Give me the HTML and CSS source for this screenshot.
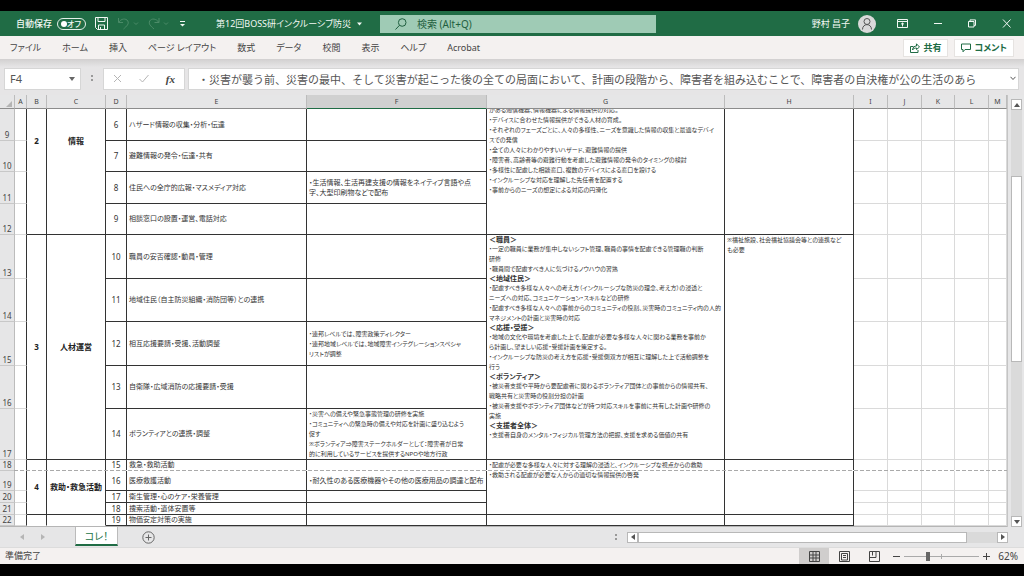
FILE: index.html
```html
<!DOCTYPE html>
<html lang="ja">
<head>
<meta charset="utf-8">
<meta name="viewport" content="width=device-width, initial-scale=1">
<title>第12回BOSS研インクルーシブ防災</title>
<link rel="stylesheet" href="styles.css">
</head>
<body>
<div class="app">
  <header class="titlebar">
    <div class="quick">
      <label class="autosave">自動保存 <input type="checkbox" class="switch-input"><span class="switch">オフ</span></label>
      <button class="icon-btn save" aria-label="上書き保存"><svg width="13" height="13" viewBox="0 0 13 13"><path d="M.5.5h12v12h-10l-2-2zM3 .5v4h7v-4M3.500 12.500v-4.500h6v4.500M5.500 10v2.500"/></svg></button>
      <button class="icon-btn dim" aria-label="元に戻す"><svg width="22" height="13" viewBox="0 0 22 13"><path d="M1.500 1v4.500H6M1.800 5.300C4 1.500 9 1 10.800 4c1.500 3-1 5-4.300 8M17 5.500l2 2 2-2"/></svg></button>
      <button class="icon-btn dim" aria-label="やり直し"><svg width="22" height="13" viewBox="0 0 22 13"><path d="M11 1v4.500H6.500M10.700 5.300C8.500 1.500 3.500 1 1.700 4c-1.500 3 1 5 4.300 8M16 5.500l2 2 2-2"/></svg></button>
      <button class="icon-btn" aria-label="クイック アクセス"><svg width="7" height="8" viewBox="0 0 7 8"><path d="M1 1.500h5"/><path class="fill" d="M1 4h5L3.500 6.500z"/></svg></button>
    </div>
    <button class="doc-name">第12回BOSS研インクルーシブ防災 <svg width="5" height="4" viewBox="0 0 5 4"><path class="fill" d="M0 .5h5L2.500 3.500z"/></svg></button>
    <label class="search"><svg width="12" height="12" viewBox="0 0 12 12"><circle cx="7.200" cy="4.500" r="3.800"/><path d="M4.500 7.300L.5 11.500"/></svg><input type="text" placeholder="検索 (Alt+Q)" aria-label="検索"></label>
    <div class="account">
      <span>野村 昌子</span>
      <span class="avatar"><svg width="18" height="18" viewBox="0 0 18 18"><circle cx="9" cy="6.500" r="3"/><path d="M4.500 14.500c0-6.500 9-6.500 9 0"/></svg></span>
    </div>
    <div class="window-btns">
      <button class="icon-btn" aria-label="リボンの表示オプション"><svg width="11" height="9" viewBox="0 0 11 9"><path d="M.5.5h10v8H.5zM.5 2.500h10M5.500 7.500V4M4 5.300L5.500 4 7 5.300"/></svg></button>
      <button class="icon-btn" aria-label="最小化"><svg width="8" height="9" viewBox="0 0 8 9"><path d="M0 4.500h8"/></svg></button>
      <button class="icon-btn" aria-label="元のサイズに戻す"><svg width="8" height="9" viewBox="0 0 8 9"><path d="M.5 2.500h5.500v5.500H.5zM2 2.500V.9h5.500v5.500H6"/></svg></button>
      <button class="icon-btn" aria-label="閉じる"><svg width="9" height="9" viewBox="0 0 9 9"><path d="M1 .5l7.500 8M8.500.5L1 8.500"/></svg></button>
    </div>
  </header>

  <nav class="ribbon">
    <button>ファイル</button><button>ホーム</button><button>挿入</button><button>ページ レイアウト</button><button>数式</button><button>データ</button><button>校閲</button><button>表示</button><button>ヘルプ</button><button>Acrobat</button>
    <div class="ribbon-actions">
      <button class="action"><svg width="10" height="10" viewBox="0 0 10 10"><path d="M3.500 3.500h-3v6h7.500V7M2.500 7c.3-3 2-4 4-4V.8L9.500 4 6.500 6.500V5C4.500 5 3.300 5.500 2.500 7z"/></svg>共有</button>
      <button class="action"><svg width="10" height="10" viewBox="0 0 10 10"><path d="M.5 1h9v5.500H4L2 8.800V6.500H.5z"/></svg>コメント</button>
    </div>
  </nav>

  <div class="formula-row">
    <div class="name-box"><input type="text" value="F4" aria-label="名前ボックス"><svg width="6" height="4" viewBox="0 0 6 4"><path d="M0 0h6L3 4z"/></svg></div>
    <span class="grip"></span>
    <div class="formula-btns">
      <button aria-label="キャンセル"><svg width="9" height="9" viewBox="0 0 9 9"><path d="M1 1l7 7M8 1L1 8"/></svg></button>
      <button aria-label="入力"><svg width="10" height="9" viewBox="0 0 10 9"><path d="M.5 5L3.500 8 9.500 1"/></svg></button>
      <button class="fx" aria-label="関数の挿入">fx</button>
    </div>
    <div class="formula"><input type="text" aria-label="数式バー" value="・災害が襲う前、災害の最中、そして災害が起こった後の全ての局面において、計画の段階から、障害者を組み込むことで、障害者の自決権が公の生活のあら"><svg width="6" height="5" viewBox="0 0 6 5"><path d="M.5.8L3 3.500 5.500.8"/></svg></div>
  </div>

  <main class="workspace">
    <div class="sheet">
      <table>
        <colgroup><col class="c-num"><col class="c-a"><col class="c-b"><col class="c-c"><col class="c-d"><col class="c-e"><col class="c-f"><col class="c-g"><col class="c-h"><col class="c-i"><col class="c-i"><col class="c-k"><col class="c-i"><col></colgroup>
        <thead><tr><th class="corner"><svg width="6" height="6" viewBox="0 0 6 6"><path d="M6 0v6H0z"/></svg></th><th>A</th><th>B</th><th>C</th><th>D</th><th>E</th><th class="selected">F</th><th>G</th><th>H</th><th>I</th><th>J</th><th>K</th><th>L</th><th>M</th></tr></thead>
        <tbody>
          <tr class="h32"><th>9</th><td class="edge"></td><td class="box group upper" rowspan="4">2</td><td class="box group upper" rowspan="4">情報</td><td class="box no">6</td><td class="box">ハザード情報の収集・分析・伝達</td><td class="box"></td>
            <td class="box note" rowspan="4"><div class="scrolled"><p>がある通信機器、情報機器による情報提供の対応。</p><p>・デバイスに合わせた情報提供ができる人材の育成。</p><p>・それぞれのフェーズごとに、人々の多様性、ニーズを意識した情報の収集と最適なデバイ<br>スでの発信</p><p>・全ての人々にわかりやすいハザード、避難情報の提供</p><p>・障害者、高齢者等の避難行動を考慮した避難情報の発令のタイミングの検討</p><p>・多様性に配慮した相談窓口、複数のデバイスによる窓口を設ける</p><p>・インクルーシブな対応を理解した先任者を配置する</p><p>・事前からのニーズの想定による対応の円滑化</p></div></td>
            <td class="box" rowspan="4"></td><td></td><td></td><td></td><td></td><td></td></tr>
          <tr class="h31"><th>10</th><td class="edge"></td><td class="box no">7</td><td class="box">避難情報の発令・伝達・共有</td><td class="box"></td><td></td><td></td><td></td><td></td><td></td></tr>
          <tr class="h32"><th>11</th><td class="edge"></td><td class="box no">8</td><td class="box">住民への全庁的広報・マスメディア対応</td><td class="box">・生活情報、生活再建支援の情報をネイティブ言語や点<br>字、大型印刷物などで配布</td><td></td><td></td><td></td><td></td><td></td></tr>
          <tr class="h31"><th>12</th><td class="edge"></td><td class="box no">9</td><td class="box">相談窓口の設置・運営、電話対応</td><td class="box"></td><td></td><td></td><td></td><td></td><td></td></tr>
          <tr class="h44"><th>13</th><td class="edge"></td><td class="box group" rowspan="5">3</td><td class="box group" rowspan="5">人材運営</td><td class="box no">10</td><td class="box">職員の安否確認・動員・管理</td><td class="box"></td>
            <td class="box note" rowspan="5"><h2>＜職員＞</h2><p>・一定の職員に業務が集中しないシフト管理、職員の事情を配慮できる管理職の判断<br>研修</p><p>・職員間で配慮すべき人に気づけるノウハウの習熟</p><h2>＜地域住民＞</h2><p>・配慮すべき多様な人々への考え方（インクルーシブな防災の理念、考え方）の浸透と<br>ニーズへの対応、コミュニケーション・スキルなどの研修</p><p>・配慮すべき多様な人々への事前からのコミュニティの役割、災害時のコミュニティ内の人的<br>マネジメントの計画と災害時の対応</p><h2>＜応援・受援＞</h2><p>・地域の文化や環境を考慮した上で、配慮が必要な多様な人々に関わる業務を事前か<br>ら計画し、望ましい応援・受援計画を策定する。</p><p>・インクルーシブな防災の考え方を応援・受援側双方が相互に理解した上で活動調整を<br>行う</p><h2>＜ボランティア＞</h2><p>・被災者支援や平時から要配慮者に関わるボランティア団体との事前からの情報共有、<br>戦略共有と災害時の役割分担の計画</p><p>・被災者支援やボランティア団体などが持つ対応スキルを事前に共有した計画や研修の<br>実施</p><h2>＜支援者全体＞</h2><p>・支援者自身のメンタル・フィジカル管理方法の把握、支援を求める価値の共有</p></td>
            <td class="box note" rowspan="5"><p>※福祉施設、社会福祉協議会等との連携など<br>も必要</p></td><td></td><td></td><td></td><td></td><td></td></tr>
          <tr class="h43"><th>14</th><td class="edge"></td><td class="box no">11</td><td class="box">地域住民（自主防災組織・消防団等）との連携</td><td class="box"></td><td></td><td></td><td></td><td></td><td></td></tr>
          <tr class="h44"><th>15</th><td class="edge"></td><td class="box no">12</td><td class="box">相互応援要請・受援、活動調整</td><td class="box dense">・連邦レベルでは、障害政策ディレクター<br>・連邦地域レベルでは、地域障害インテグレーションスペシャ<br>リストが調整</td><td></td><td></td><td></td><td></td><td></td></tr>
          <tr class="h43"><th>16</th><td class="edge"></td><td class="box no">13</td><td class="box">自衛隊・広域消防の応援要請・受援</td><td class="box"></td><td></td><td></td><td></td><td></td><td></td></tr>
          <tr class="h51"><th>17</th><td class="edge"></td><td class="box no">14</td><td class="box">ボランティアとの連携・調整</td><td class="box dense">・災害への備えや緊急事態管理の研修を実施<br>・コミュニティへの緊急時の備えや対応を計画に盛り込むよう<br>促す<br>※ボランティア⇒障害ステークホルダーとして：障害者が日常<br>的に利用しているサービスを提供するNPOや地方行政</td><td></td><td></td><td></td><td></td><td></td></tr>
          <tr class="h11"><th class="breaks">18<span class="page-break"></span></th><td class="edge"></td><td class="box group" rowspan="4">4</td><td class="box group" rowspan="4">救助・救急活動</td><td class="box no open">15</td><td class="box open">救急・救助活動</td><td class="box open"></td>
            <td class="box note" rowspan="4"><p>・配慮が必要な多様な人々に対する理解の浸透と、インクルーシブな視点からの救助</p><p>・救助される配慮が必要な人からの適切な情報提供の啓発</p></td>
            <td class="box" rowspan="4"></td><td></td><td></td><td></td><td></td><td></td></tr>
          <tr class="h20"><th>19</th><td class="edge"></td><td class="box no">16</td><td class="box">医療救護活動</td><td class="box">・耐久性のある医療機器やその他の医療用品の調達と配布</td><td></td><td></td><td></td><td></td><td></td></tr>
          <tr class="h12"><th>20</th><td class="edge"></td><td class="box no">17</td><td class="box">衛生管理・心のケア・栄養管理</td><td class="box"></td><td></td><td></td><td></td><td></td><td></td></tr>
          <tr class="h12"><th>21</th><td class="edge"></td><td class="box no">18</td><td class="box">捜索活動・遺体安置等</td><td class="box"></td><td></td><td></td><td></td><td></td><td></td></tr>
          <tr class="h11"><th>22</th><td class="edge"></td><td class="box open"></td><td class="box open"></td><td class="box no">19</td><td class="box">物価安定対策の実施</td><td class="box"></td><td class="box"></td><td class="box"></td><td></td><td></td><td></td><td></td><td></td></tr>
          <tr class="h12"><th></th><td class="edge"></td><td class="box"></td><td class="box"></td><td class="box"></td><td class="box"></td><td class="box"></td><td class="box"></td><td class="box"></td><td></td><td></td><td></td><td></td><td></td></tr>
        </tbody>
      </table>
    </div>
    <div class="vscroll">
      <button aria-label="上へ"><svg width="6" height="4" viewBox="0 0 6 4"><path d="M0 4h6L3 0z"/></svg></button>
      <div class="vtrack"><div class="vthumb"></div></div>
      <button aria-label="下へ"><svg width="6" height="4" viewBox="0 0 6 4"><path d="M0 0h6L3 4z"/></svg></button>
    </div>
  </main>

  <div class="tabbar">
    <div class="tab-nav">
      <button aria-label="前のシート"><svg width="4" height="6" viewBox="0 0 4 6"><path d="M4 0v6L0 3z"/></svg></button>
      <button aria-label="次のシート"><svg width="4" height="6" viewBox="0 0 4 6"><path d="M0 0v6l4-3z"/></svg></button>
    </div>
    <button class="sheet-tab">コレ！</button>
    <button class="add" aria-label="新しいシート"><svg width="13" height="13" viewBox="0 0 13 13"><circle cx="6.500" cy="6.500" r="5.700"/><path d="M3.500 6.500h6M6.500 3.500v6"/></svg></button>
    <span class="grip"></span>
    <div class="hscroll">
      <button aria-label="左へ"><svg width="4" height="6" viewBox="0 0 4 6"><path d="M4 0v6L0 3z"/></svg></button>
      <div class="htrack"><div class="hthumb"></div></div>
      <button aria-label="右へ"><svg width="4" height="6" viewBox="0 0 4 6"><path d="M0 0v6l4-3z"/></svg></button>
    </div>
  </div>

  <footer class="status">
    <span class="ready">準備完了</span>
    <button class="view active" aria-label="標準"><svg width="11" height="11" viewBox="0 0 11 11"><path d="M.5.5h10v10H.5zM.5 4h10M.5 7h10M4 .5v10M7 .5v10"/></svg></button>
    <button class="view" aria-label="ページ レイアウト"><svg width="11" height="11" viewBox="0 0 11 11"><path d="M.5.5h10v10H.5zM2.500 2.500h6v6.500h-6zM4 4.500h3M4 6.500h3"/></svg></button>
    <button class="view" aria-label="改ページ プレビュー"><svg width="11" height="11" viewBox="0 0 11 11"><path d="M.5.5h10v10H.5zM.5 6.500h6.500V.5M3.500.5v4"/></svg></button>
    <div class="zoom">
      <button aria-label="縮小"><svg width="7" height="7" viewBox="0 0 7 7"><path d="M0 3.500h7"/></svg></button>
      <input type="range" min="0" max="100" value="30" aria-label="ズーム">
      <button aria-label="拡大"><svg width="7" height="7" viewBox="0 0 7 7"><path d="M0 3.500h7M3.500 0v7"/></svg></button>
      <span>62%</span>
    </div>
  </footer>
</div>
</body>
</html>
```
FILE: styles.css
```css
* { box-sizing: border-box; }

html, body { height: 100%; margin: 0; }

body {
  background: #000;
  color: #444;
  font-family: "Noto Sans", "Noto Sans CJK JP", sans-serif;
  font-size: 10px;
  font-feature-settings: "palt";
}

button, input {
  margin: 0;
  padding: 0;
  border: 0;
  background: none;
  color: inherit;
  font: inherit;
  font-feature-settings: inherit;
}

svg { display: block; flex: none; fill: none; stroke: currentColor; stroke-width: 1; }
svg .fill { fill: currentColor; stroke: none; }

.app {
  display: flex;
  flex-direction: column;
  height: 100%;
  padding: 11px 0 12px;
}

/* Title bar */
.titlebar {
  display: flex;
  flex: none;
  align-items: center;
  height: 25px;
  background: #206c45;
  color: #f2f8f4;
  line-height: 14px;
}
.quick { display: flex; align-items: center; width: 216px; padding-left: 16px; gap: 9px; }
.autosave { display: flex; align-items: center; gap: 5px; font-size: 9px; font-weight: 500; white-space: nowrap; }
.switch-input { position: absolute; opacity: 0; }
.switch {
  display: flex;
  align-items: center;
  justify-content: space-between;
  width: 29px;
  height: 12px;
  padding: 0 4px 0 3px;
  border: 1px solid #e4f0e9;
  border-radius: 6px;
  font-size: 8px;
}
.switch::before { content: ""; width: 6px; height: 6px; border-radius: 50%; background: #fff; }
.icon-btn { display: flex; }
.dim { color: #4b8b68; }
.doc-name { display: flex; align-items: center; gap: 6px; width: 164px; white-space: nowrap; font-size: 9px; }
.search {
  display: flex;
  flex: 0 1 276px;
  align-items: center;
  gap: 10px;
  height: 18px;
  padding-left: 15px;
  background: #9fcbb5;
  color: #1f5f3f;
}
.search input { flex: 1; min-width: 0; }
.search input::placeholder { color: #1f5f3f; opacity: 1; }
.account { display: flex; align-items: center; gap: 8px; margin-left: auto; font-size: 9px; white-space: nowrap; }
.avatar { border-radius: 50%; background: #d9d9d9; color: #555; }
.window-btns { display: flex; align-items: center; gap: 26px; padding: 0 13px 0 21px; }

/* Ribbon tabs */
.ribbon {
  display: flex;
  flex: none;
  align-items: center;
  gap: 21px;
  height: 23px;
  padding: 0 10px;
  background: #f4f1f0;
  font-size: 9px;
  white-space: nowrap;
}
.ribbon-actions { display: flex; gap: 6px; margin-left: auto; }
.action {
  display: flex;
  align-items: center;
  gap: 3px;
  height: 18px;
  padding: 0 6px;
  border: 1px solid #e6e3e1;
  background: #fff;
  color: #206c45;
  font-weight: 700;
}

/* Formula bar */
.formula-row {
  display: flex;
  flex: none;
  align-items: center;
  height: 36px;
  padding: 6px 5px 3px 4px;
  background: linear-gradient(#d2d0d0, #e6e5e6 8px);
  color: #555;
}
.name-box, .formula-btns, .formula {
  display: flex;
  align-items: center;
  height: 22px;
  border: 1px solid #d6d6d6;
  background: #fff;
}
.name-box { width: 77px; padding: 0 5px; }
.name-box input { flex: 1; min-width: 0; font-size: 11px; }
.name-box svg { fill: #666; stroke: none; }
.grip { width: 22px; height: 9px; background: radial-gradient(circle, #999 1px, transparent 1px) center top / 22px 4px repeat-y; }
.formula-btns { width: 82px; justify-content: space-between; padding: 0 9px; color: #b5b5b5; }
.formula-btns .fx { color: #444; font: italic 700 11px "Liberation Serif", serif; }
.formula { flex: 1; min-width: 0; margin-left: 3px; padding: 0 2px 0 9px; }
.formula input {
  flex: 1;
  min-width: 0;
  font-family: "Noto Sans CJK JP", sans-serif;
  font-size: 11px;
  font-feature-settings: normal;
}

/* Sheet */
.workspace { display: flex; flex: 1; min-height: 0; background: #e6e6e7; }
.sheet { flex: 1; min-width: 0; overflow: hidden; background: #fff; border-bottom: 1px solid #b5b5b5; }
.sheet table { width: 100%; table-layout: fixed; border-collapse: separate; border-spacing: 0; }
.c-num { width: 15px; }
.c-a { width: 12px; }
.c-b { width: 20px; }
.c-c { width: 59px; }
.c-d { width: 21px; }
.c-e, .c-f { width: 180px; }
.c-g { width: 238px; }
.c-h { width: 129px; }
.c-i { width: 34px; }
.c-k { width: 33px; }

.sheet th {
  padding: 0;
  border-right: 1px solid #bcbcbc;
  border-bottom: 1px solid #c8c8c8;
  background: #e6e6e7;
  color: #444;
  font-size: 7px;
  font-weight: 400;
  line-height: 10px;
}
.sheet thead th { height: 14px; border-bottom-color: #8c8c8c; }
.sheet thead .corner { padding: 4px 0 0 6px; }
.corner svg { fill: #b4b4b4; stroke: none; }
.sheet thead .selected { background: #d0d0d0; border-bottom: 1px solid #206c45; }
.sheet tbody th { vertical-align: bottom; font-size: 8px; }

.sheet td {
  padding: 0 0 0 2px;
  border-right: 1px solid #dadada;
  border-bottom: 1px solid #dadada;
  color: #333;
  font-size: 7px;
  line-height: 10px;
  white-space: nowrap;
  vertical-align: middle;
}
.sheet td.edge { border-right-color: #333; }
.sheet td.box { border-color: #333; }
.sheet td.open { border-bottom-color: transparent; }
.sheet td.no { padding: 0; text-align: center; font-size: 8px; }
.sheet td.group { padding: 0; text-align: center; font-size: 8px; font-weight: 700; color: #222; }
.sheet td.upper { padding-bottom: 62px; }
.sheet td.dense { font-size: 6px; }
.sheet td.note { font-size: 6px; vertical-align: top; }
.note p { margin: 0; line-height: 10px; }
.note h2 { margin: 0; font-size: 7px; font-weight: 700; line-height: 9px; }
.scrolled { height: 120px; overflow: hidden; }
.scrolled p:first-child { margin-top: -4px; }

.h11 { height: 11px; }
.h12 { height: 12px; }
.h20 { height: 20px; }
.h31 { height: 31px; }
.h32 { height: 32px; }
.h43 { height: 43px; }
.h44 { height: 44px; }
.h51 { height: 51px; }

.sheet .breaks { position: relative; }
.page-break {
  position: absolute;
  bottom: -1px;
  left: 100%;
  z-index: 1;
  width: 100vw;
  height: 1px;
  background: repeating-linear-gradient(90deg, #aaa 0 4px, #fff 4px 6px);
}

/* Scroll bars */
.vscroll { display: flex; flex-direction: column; width: 17px; padding: 4px 3px 0; border-left: 1px solid #c4c4c4; }
.vscroll button, .hscroll button {
  display: flex;
  flex: none;
  align-items: center;
  justify-content: center;
  width: 11px;
  height: 11px;
  border: 1px solid #b8b8b8;
  background: #fff;
}
.vscroll svg, .hscroll svg { fill: #555; stroke: none; }
.vtrack { flex: 1; width: 11px; padding-top: 66px; background: #dadada; }
.vthumb { height: 55%; max-height: 186px; border: 1px solid #b8b8b8; background: #fff; }

/* Sheet tabs */
.tabbar { display: flex; flex: none; align-items: center; height: 21px; padding-right: 16px; background: #e6e6e7; border-bottom: 1px solid #dcdcdc; }
.tab-nav { display: flex; justify-content: space-between; width: 75px; padding: 0 30px 0 20px; }
.tab-nav svg { fill: #b5b5b5; stroke: none; }
.sheet-tab {
  align-self: flex-start;
  width: 43px;
  height: 19px;
  border: solid #bbb;
  border-width: 0 1px;
  border-bottom: 2px solid #206c45;
  background: #fff;
  color: #217346;
}
.add { margin: 0 auto 0 24px; color: #666; }
.hscroll { display: flex; width: 381px; }
.htrack { flex: 1; padding-right: 30px; background: #dadada; }
.hthumb { height: 11px; border: 1px solid #b8b8b8; background: #fff; }

/* Status bar */
.status { display: flex; flex: none; align-items: stretch; height: 16px; background: #f4f1f0; line-height: 16px; }
.ready { flex: 1; padding-left: 5px; font-size: 9px; }
.view { display: flex; align-items: center; justify-content: center; width: 30px; }
.view.active { background: #d0cecd; }
.zoom { display: flex; align-items: center; gap: 4px; padding: 0 6px 0 4px; }
.zoom span { padding-left: 4px; }
.zoom input {
  width: 75px;
  height: 9px;
  appearance: none;
  background:
    linear-gradient(#aaa, #aaa) center / 1px 5px no-repeat,
    linear-gradient(#aaa, #aaa) center / 100% 1px no-repeat;
}
.zoom input::-webkit-slider-thumb { appearance: none; width: 4px; height: 9px; background: #666; }
```
